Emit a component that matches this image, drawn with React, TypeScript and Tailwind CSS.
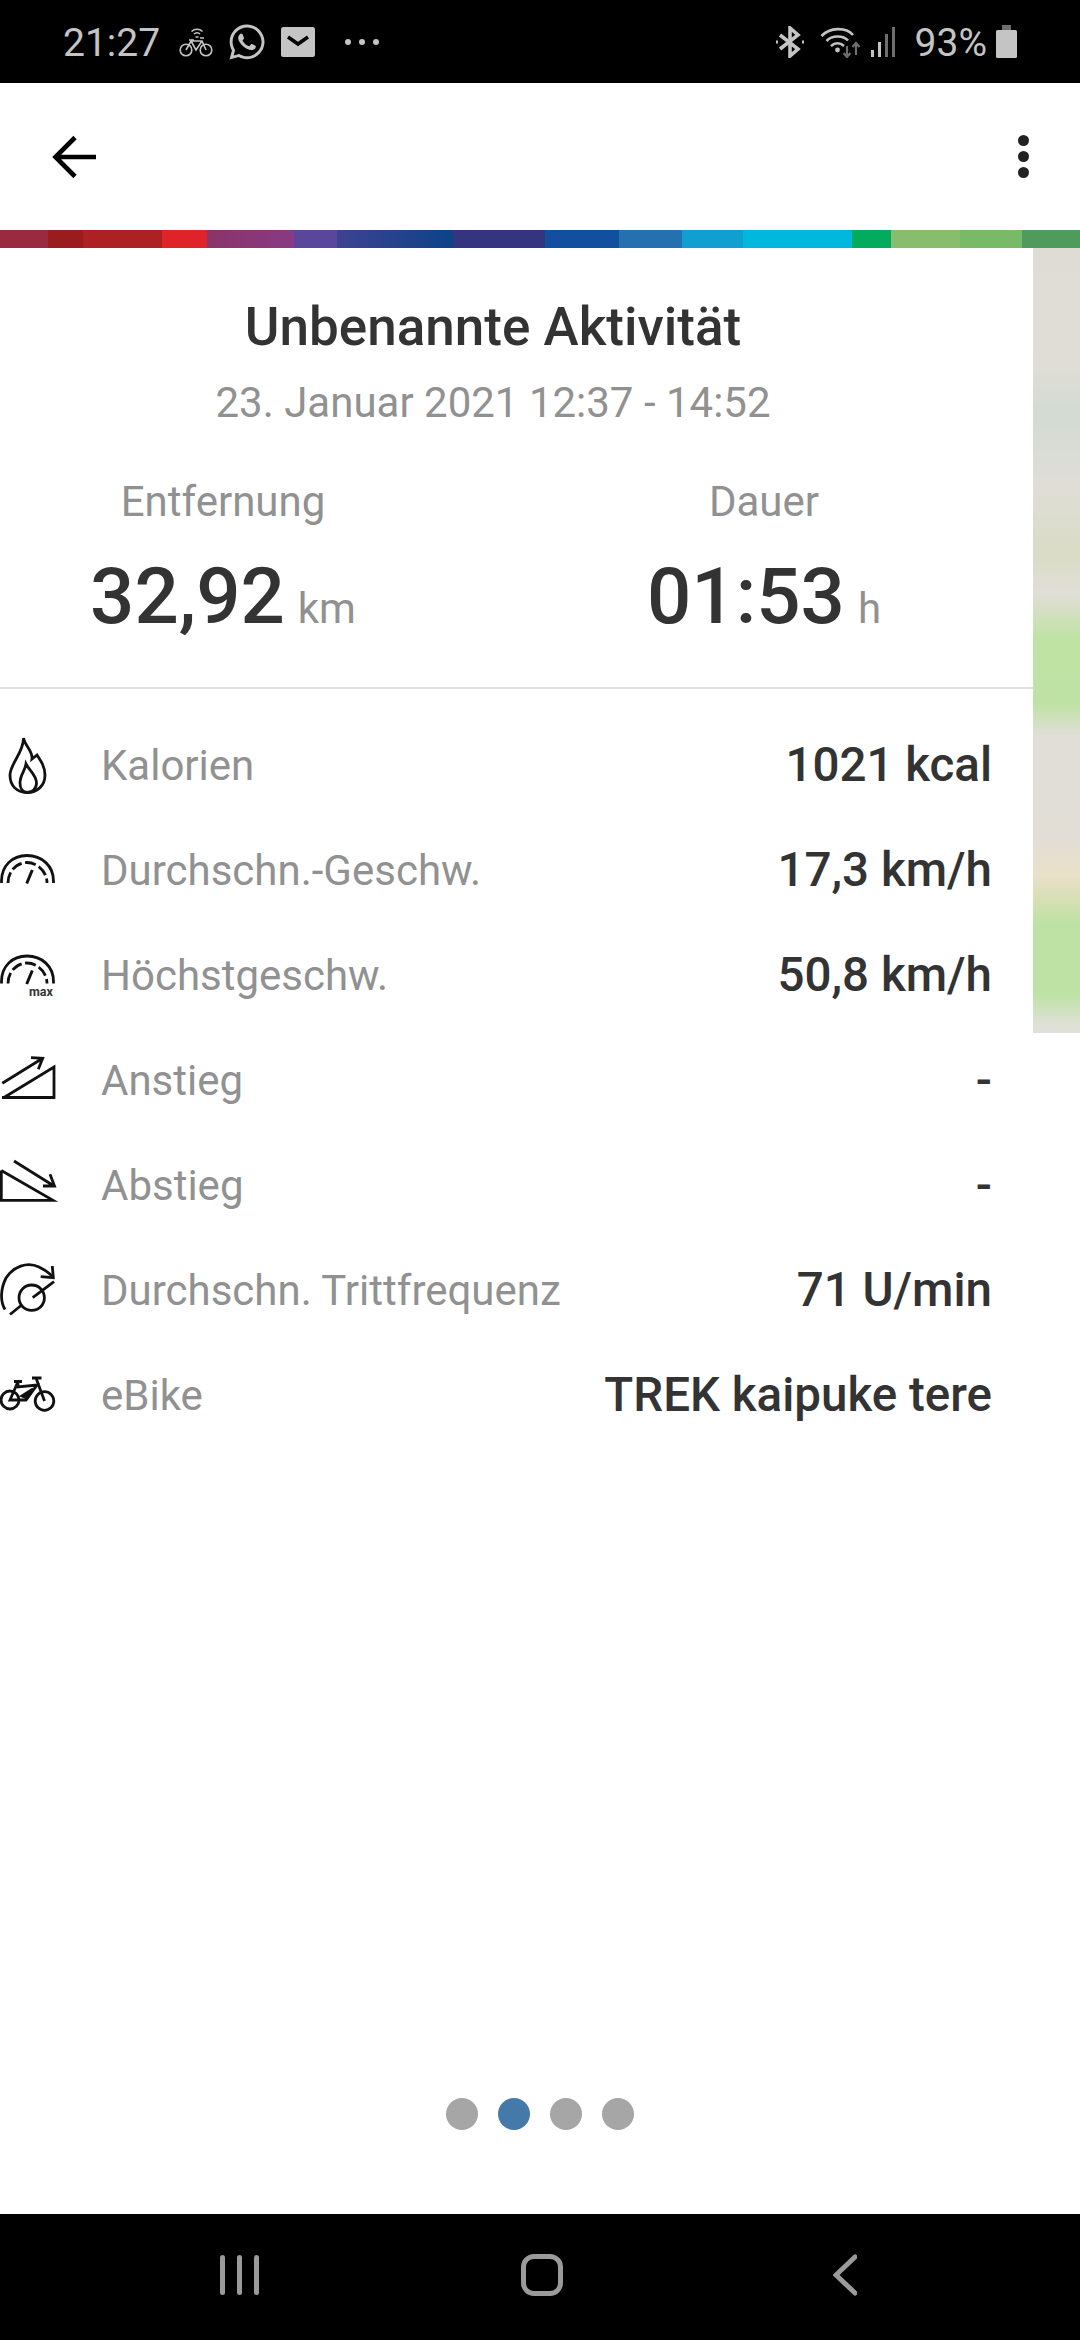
import React from "react"
import { FaWhatsapp } from "react-icons/fa"

const stripe = [
  { w: 48, c: "bg-[#9a2a40]" },
  { w: 35, c: "bg-[#9b1c1e]" },
  { w: 79, c: "bg-[#ad2024]" },
  { w: 45, c: "bg-[#de2429]" },
  { w: 87, c: "bg-[linear-gradient(90deg,#8a3468,#883a84)]" },
  { w: 43, c: "bg-[#5a479c]" },
  { w: 116, c: "bg-[linear-gradient(90deg,#3f4290,#0b4388)]" },
  { w: 92, c: "bg-[#33367f]" },
  { w: 74, c: "bg-[#134f9f]" },
  { w: 63, c: "bg-[#2570ae]" },
  { w: 61, c: "bg-[#0f9fd0]" },
  { w: 109, c: "bg-[#00b7de]" },
  { w: 39, c: "bg-[#03ab5c]" },
  { w: 69, c: "bg-[#88bd6e]" },
  { w: 62, c: "bg-[#78ba68]" },
  { w: 58, c: "bg-[#4f9b5c]" },
]

const Icon = ({ children }: { children: React.ReactNode }) => (
  <svg
    viewBox="0 0 60 60"
    className="w-[60px] h-[60px] shrink-0"
    fill="none"
    stroke="#111"
    strokeWidth="2.8"
  >
    {children}
  </svg>
)

const Gauge = ({ dy = 0 }: { dy?: number }) => (
  <g transform={`translate(0 ${dy})`}>
    <path d="M1.5 42V40C1.5 25 12 14.5 27 14.5S53.5 25 53.5 40V42" />
    <path
      d="M8 42C8 30 17 21.5 27 21.5S47 30 47 42"
      strokeDasharray="11 3.5"
    />
    <path d="M26.7 42.5L32.3 29" strokeWidth="3" />
  </g>
)

const rows = [
  {
    label: "Kalorien",
    value: "1021 kcal",
    icon: (
      <Icon>
        <path d="M23.5 2C25 10 33 15 32 23L37 19C41 25 45 31 45 39C45 50 37 56.5 27 56.5S10 50 10 39C10 28 24 16 23.5 2Z" />
        <path d="M26 28C29 34 36.5 39 36.5 47C36.5 53 32 56.5 27.5 56.5S20 53 20 47C20 39 25 35 26 28Z" />
      </Icon>
    ),
  },
  { label: "Durchschn.-Geschw.", value: "17,3 km/h", icon: <Icon><Gauge /></Icon> },
  {
    label: "Höchstgeschw.",
    value: "50,8 km/h",
    icon: (
      <Icon>
        <Gauge dy={-4.5} />
        <text x="29" y="50" fontFamily="Roboto" fontWeight="700" fontSize="12.5" fill="#333" stroke="none">
          max
        </text>
      </Icon>
    ),
  },
  {
    label: "Anstieg",
    value: "-",
    icon: (
      <Icon>
        <path d="M4 46.5L54 16V46.5H2" />
        <path d="M2.3 32.3L42.7 7.3M31 6.7L42.7 7.3L38.3 18.3" />
      </Icon>
    ),
  },
  {
    label: "Abstieg",
    value: "-",
    icon: (
      <Icon>
        <path d="M1.3 14.5V44.3H53L1.3 14.5" />
        <path d="M14 5L54 30M43 30H54.5L50 18.3" />
      </Icon>
    ),
  },
  {
    label: "Durchschn. Trittfrequenz",
    value: "71 U/min",
    icon: (
      <Icon>
        <path d="M5 48.5C0 40 0.5 28 6 17C13 6 27 0 39 6C45 9 50 12 53 16.5" />
        <path d="M40.7 15.7L53.3 16.7L52.3 5" />
        <circle cx="31.7" cy="36.7" r="12.7" />
        <path d="M10 53.5L21.7 44M32.7 36.7L54 20.7" />
      </Icon>
    ),
  },
  {
    label: "eBike",
    value: "TREK kaipuke tere",
    icon: (
      <Icon>
        <circle cx="10" cy="34" r="9" />
        <circle cx="44.5" cy="35" r="9.3" />
        <path d="M32 12H41.5M36 12L44.5 35M14 15.5H22M18 15.5L10 34H26L37 19L18 21Z" />
        <path d="M22 30L33 23L27 32Z" fill="#111" />
      </Icon>
    ),
  },
]

const Stat = ({ label, value, unit, className }: { label: string; value: string; unit: string; className: string }) => (
  <div className={`flex flex-col items-center w-[446px] ${className}`}>
    <div className="text-[42px] leading-[49px] text-[#919191]">{label}</div>
    <div className="mt-[25px] flex items-baseline h-[92px]">
      <span className="text-[78px] leading-[92px] font-medium text-[#333333]">{value}</span>
      <span className="ml-[13px] text-[42px] text-[#919191]">{unit}</span>
    </div>
  </div>
)

export default function App() {
  return (
    <div className="w-[1080px] h-[2340px] flex flex-col bg-white font-['Roboto',sans-serif]">
      <div className="h-[83px] bg-black flex items-center text-[#c4c4c4] shrink-0">
        <span className="ml-[63px] pt-[3px] text-[39px] leading-[80px]">21:27</span>
        <svg viewBox="0 0 34 30" className="ml-[19px] w-[34px] h-[30px]" fill="none" stroke="#c4c4c4" strokeWidth="1.6">
          <circle cx="7" cy="23" r="5.8" />
          <circle cx="27" cy="23" r="5.8" />
          <path d="M7 23L12 14H23L27 23M12 14L17 23L23 14M10 13H15M21 11H25" />
          <path d="M15 7A4 4 0 0 1 21 7M12.5 4.5A8 8 0 0 1 23.5 4.5M16.5 10H19.5" strokeWidth="1.5" />
        </svg>
        <FaWhatsapp className="ml-[14px] w-[40px] h-[40px] text-[#c4c4c4]" />
        <svg viewBox="0 0 34 30" className="ml-[14px] w-[34px] h-[30px]">
          <rect width="34" height="30" rx="2.5" fill="#c4c4c4" />
          <path d="M7 10L17 17L27 10" fill="none" stroke="#000" strokeWidth="3.5" />
        </svg>
        <div className="ml-[30px] flex gap-[8px]">
          <span className="w-[6px] h-[6px] rounded-full bg-[#c4c4c4]" />
          <span className="w-[6px] h-[6px] rounded-full bg-[#c4c4c4]" />
          <span className="w-[6px] h-[6px] rounded-full bg-[#c4c4c4]" />
        </div>
        <svg viewBox="0 0 30 32" className="ml-auto w-[30px] h-[32px]" fill="none" stroke="#c4c4c4" strokeWidth="3.6">
          <path d="M5 9L23 23L15 30V2L23 9L5 23" />
          <path d="M1 16H3M27 16H29" strokeWidth="3" />
        </svg>
        <svg viewBox="0 0 42 32" className="ml-[15px] w-[42px] h-[32px]" fill="none" stroke="#c4c4c4" strokeWidth="2.6">
          <path d="M1.5 10C10 1 26 1 33 9M6.5 15C12 9 23 9 28 14.5M11 20C15 16.5 20 16.5 24 20" />
          <circle cx="17.5" cy="24" r="2.4" fill="#c4c4c4" stroke="none" />
          <path d="M27 20V31M23.5 27L27 31L30.5 27M36 17V29M32.5 21L36 17L39.5 21" stroke="#6e6e6e" strokeWidth="2.2" />
        </svg>
        <div className="ml-[9px] flex items-end gap-[4px] h-[30px] w-[28px]">
          <span className="w-[3px] h-[7px] bg-[#c4c4c4]" />
          <span className="w-[3px] h-[15px] bg-[#c4c4c4]" />
          <span className="w-[3px] h-[23px] bg-[#6e6e6e]" />
          <span className="w-[3px] h-[30px] bg-[#6e6e6e]" />
        </div>
        <span className="ml-[16px] pt-[3px] text-[39px] leading-[80px]">93%</span>
        <svg viewBox="0 0 21 33" className="ml-[9px] mr-[63px] w-[21px] h-[33px]">
          <rect x="6" width="9" height="5" fill="#6e6e6e" />
          <rect y="5" width="21" height="28" rx="1.5" fill="#c4c4c4" />
        </svg>
      </div>

      <div className="h-[147px] flex items-center justify-between shrink-0">
        <svg viewBox="0 0 44 44" className="ml-[52px] w-[44px] h-[44px]" fill="none" stroke="#000" strokeWidth="4.6">
          <path d="M44 22H4M23 2.5L3.5 22L23 41.5" />
        </svg>
        <div className="mr-[51px] flex flex-col gap-[5px]">
          <span className="w-[11px] h-[11px] rounded-full bg-[#222222]" />
          <span className="w-[11px] h-[11px] rounded-full bg-[#222222]" />
          <span className="w-[11px] h-[11px] rounded-full bg-[#222222]" />
        </div>
      </div>

      <div className="h-[18px] flex shrink-0">
        {stripe.map((s, i) => (
          <div key={i} className={`h-full ${s.c}`} style={{ width: s.w }} />
        ))}
      </div>

      <div className="relative flex-1 flex flex-col">
        <div className="absolute top-0 right-0 w-[47px] h-[785px] bg-[linear-gradient(180deg,#dedcd5_0%,#dfddd6_15%,#d3dbd3_21%,#dfddd7_30%,#d9dcc6_39%,#e0ded8_44%,#cfe0bb_47%,#bee3a2_50%,#bfe2a4_58%,#e0ded7_62%,#e2ded6_75%,#e9e1c8_80%,#d6e0b4_83%,#bee2a4_86%,#bee2a4_95%,#dfe0d8_99%)]" />

        <div className="w-[1033px] h-[441px] border-b-2 border-[#e0e0e0] flex flex-col">
          <div className="w-[986px] flex flex-col items-center">
            <div className="mt-[48px] text-[53px] leading-[62px] font-medium text-[#333333]">Unbenannte Aktivität</div>
            <div className="mt-[20px] text-[42px] leading-[49px] text-[#919191]">23. Januar 2021 12:37 - 14:52</div>
          </div>
          <div className="mt-[50px] w-full flex">
            <Stat label="Entfernung" value="32,92" unit="km" className="" />
            <Stat label="Dauer" value="01:53" unit="h" className="ml-[95px]" />
          </div>
        </div>

        <div className="pt-[24px] w-[1033px] flex flex-col">
          {rows.map(r => (
            <div key={r.label} className="h-[105px] flex items-center">
              {r.icon}
              <span className="ml-[41px] text-[42px] text-[#919191]">{r.label}</span>
              <span className="ml-auto mr-[41px] text-[47.5px] font-medium text-[#333333]">{r.value}</span>
            </div>
          ))}
        </div>

        <div className="mt-auto mb-[84px] flex justify-center gap-[20px]">
          <span className="w-[32px] h-[32px] rounded-full bg-[#a6a6a6]" />
          <span className="w-[32px] h-[32px] rounded-full bg-[#4479aa]" />
          <span className="w-[32px] h-[32px] rounded-full bg-[#a6a6a6]" />
          <span className="w-[32px] h-[32px] rounded-full bg-[#a6a6a6]" />
        </div>
      </div>

      <div className="h-[126px] pb-[4px] bg-black flex items-center shrink-0">
        <div className="ml-[220px] flex gap-[12px] h-[40px]">
          <span className="w-[5px] h-full rounded-full bg-[#9a9a9a]" />
          <span className="w-[5px] h-full rounded-full bg-[#9a9a9a]" />
          <span className="w-[5px] h-full rounded-full bg-[#9a9a9a]" />
        </div>
        <div className="ml-[262px] w-[42px] h-[42px] rounded-[13px] border-[5px] border-[#9a9a9a]" />
        <svg viewBox="0 0 24 42" className="ml-[270px] w-[24px] h-[42px]" fill="none" stroke="#9a9a9a" strokeWidth="5" strokeLinecap="round">
          <path d="M22 3L3 21L22 39" />
        </svg>
      </div>
    </div>
  )
}
